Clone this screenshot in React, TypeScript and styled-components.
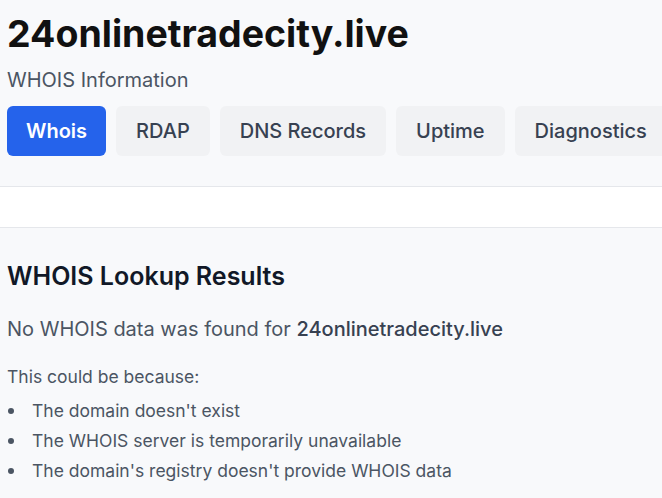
import React from "react";
import styled, { createGlobalStyle } from "styled-components";

const Global = createGlobalStyle`
  html, body { margin: 0; padding: 0; background: #f8f9fb; }
  body { font-family: Inter, "Noto Sans", sans-serif; color: #111827; overflow: hidden; }
`;

const Page = styled.div`
  width: 662px;
  height: 498px;
  overflow: hidden;
  background: #f8f9fb;
`;

const Header = styled.header`
  padding: 10px 7px 30px;
`;

const Title = styled.h1`
  margin: 0;
  font-size: 37.5px;
  line-height: 48px;
  font-weight: 700;
  color: #111;
`;

const Subtitle = styled.p`
  margin: 8px 0 0;
  font-size: 20px;
  line-height: 28px;
  color: #4b5563;
`;

const Tabs = styled.nav`
  display: flex;
  gap: 10px;
  margin-top: 12px;
  white-space: nowrap;
`;

const Tab = styled.button<{ $active?: boolean }>`
  flex: none;
  height: 50px;
  padding: 0 ${(p) => (p.$active ? 19 : 20)}px;
  border: none;
  border-radius: 6px;
  font-family: inherit;
  font-size: 20px;
  font-weight: ${(p) => (p.$active ? 600 : 500)};
  background: ${(p) => (p.$active ? "#2563eb" : "#f1f2f4")};
  color: ${(p) => (p.$active ? "#fff" : "#374151")};
`;

const Band = styled.div`
  height: 40px;
  background: #fff;
  border-top: 1px solid #e5e7eb;
  border-bottom: 1px solid #e5e7eb;
`;

const Content = styled.section`
  padding: 32px 7px 0;
`;

const H2 = styled.h2`
  margin: 0;
  font-size: 25px;
  line-height: 32px;
  font-weight: 600;
  color: #111827;
`;

const Lead = styled.p`
  margin: 23px 0 0;
  font-size: 20px;
  line-height: 28px;
  color: #4b5563;
`;

const Domain = styled.span`
  font-weight: 500;
  color: #374151;
`;

const Note = styled.p`
  margin: 22px 0 0;
  font-size: 17.5px;
  line-height: 24px;
  color: #4b5563;
`;

const List = styled.ul`
  margin: 7px 0 0;
  padding: 0;
  list-style: none;
  font-size: 17.5px;
  line-height: 30px;
  color: #4b5563;
`;

const Item = styled.li`
  display: flex;
  align-items: center;
  gap: 18px;
  &::before {
    content: "";
    flex: none;
    width: 6px;
    height: 6px;
    margin-left: 1px;
    border-radius: 50%;
    background: #4b5563;
  }
`;

export default function App() {
  return (
    <Page>
      <Global />
      <Header>
        <Title>24onlinetradecity.live</Title>
        <Subtitle>WHOIS Information</Subtitle>
        <Tabs>
          <Tab $active>Whois</Tab>
          <Tab>RDAP</Tab>
          <Tab>DNS Records</Tab>
          <Tab>Uptime</Tab>
          <Tab>Diagnostics</Tab>
        </Tabs>
      </Header>
      <Band />
      <Content>
        <H2>WHOIS Lookup Results</H2>
        <Lead>
          No WHOIS data was found for <Domain>24onlinetradecity.live</Domain>
        </Lead>
        <Note>This could be because:</Note>
        <List>
          <Item>The domain doesn't exist</Item>
          <Item>The WHOIS server is temporarily unavailable</Item>
          <Item>The domain's registry doesn't provide WHOIS data</Item>
        </List>
      </Content>
    </Page>
  );
}
